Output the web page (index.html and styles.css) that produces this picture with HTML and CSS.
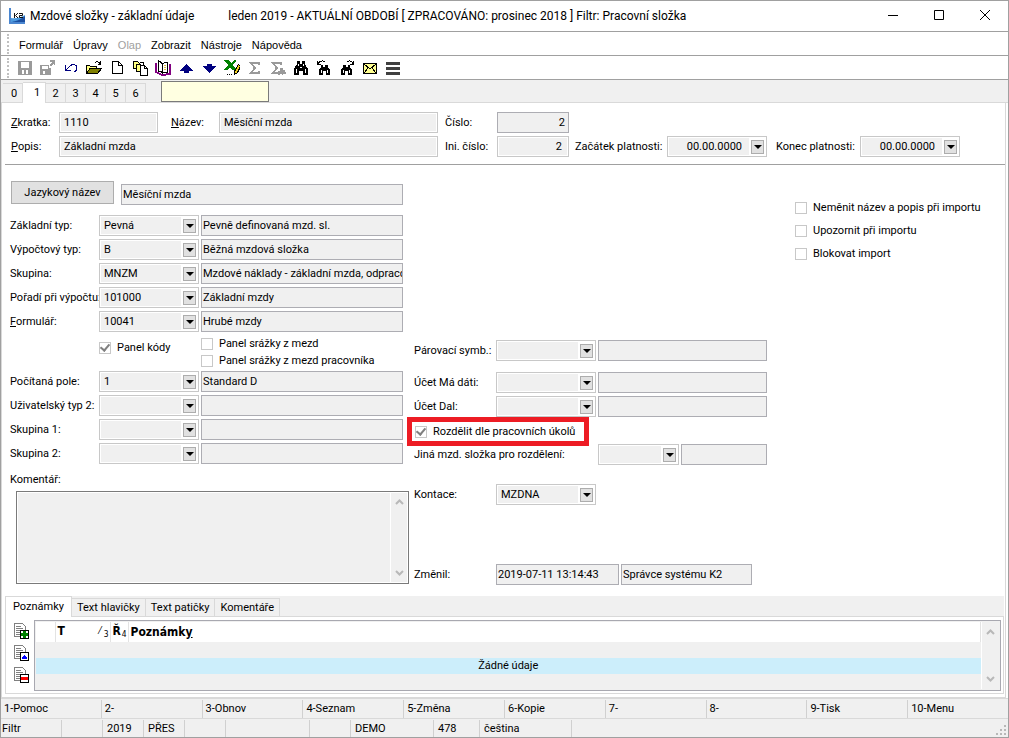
FILE: index.html
```html
<!DOCTYPE html>
<html lang="cs">
<head>
<meta charset="utf-8">
<title>Mzdové složky - základní údaje</title>
<link rel="stylesheet" href="styles.css">
</head>
<body>
<div class="window">
  <header class="titlebar">
    <svg class="logo" width="16" height="16" viewBox="0 0 16 16" aria-hidden="true"><path d="M2 10C8 11 12 9 16 7V15H2Z" fill="#4c9be0"/><path d="M3 14c4-1 8-2 13-6v7H3z" fill="#1b4fa0"/><path d="M1 0V15H16" fill="none" stroke="#4a86d0" stroke-width="2"/><path d="M5.500 5v5M9 5L6.500 7.500 9 10M10 5.500h3.500v2h-3v2H14" fill="none" stroke="#111"/></svg>
    <h1 class="title"><span>Mzdové složky - základní údaje</span><span>leden 2019 - AKTUÁLNÍ OBDOBÍ [ ZPRACOVÁNO: prosinec 2018 ] Filtr: Pracovní složka</span></h1>
    <div class="window-buttons">
      <button type="button" aria-label="Minimalizovat"><svg width="12" height="12"><path d="M1 5.500H11" stroke="#000"/></svg></button>
      <button type="button" aria-label="Maximalizovat"><svg width="12" height="12"><path d="M1.500 0.500h9v9h-9z" fill="none" stroke="#000"/></svg></button>
      <button type="button" aria-label="Zavřít"><svg width="12" height="12"><path d="M1 0L11 10M11 0L1 10" stroke="#000"/></svg></button>
    </div>
  </header>

  <nav class="menu">
    <button type="button">Formulář</button><button type="button">Úpravy</button><button type="button" disabled>Olap</button><button type="button">Zobrazit</button><button type="button">Nástroje</button><button type="button">Nápověda</button>
  </nav>

  <div class="toolbar">
    <button type="button" aria-label="Uložit"><svg viewBox="0 0 16 16"><path fill="#9a9a9a" fill-rule="evenodd" d="M1 1h14v14H1zM4 2v6h8V2zM5 10v4h2v-4zM9 10v4h2v-4z"/></svg></button>
    <button type="button" aria-label="Uložit a zavřít"><svg viewBox="0 0 16 16"><path fill="#9a9a9a" fill-rule="evenodd" d="M0 5h9v3h2v7H0zM2 6v3h6V6zM3 11v3h2v-3z"/><path fill="#9a9a9a" d="M10 0h5v5h-1V3l-3 4-2-2 4-3h-3z"/></svg></button>
    <button type="button" aria-label="Zpět"><svg viewBox="0 0 16 16"><path d="M2.500 5v5.500H8M3 10l4-4c2-2 7-2 7 2 0 2-1 3-3 4" fill="none" stroke="#000080"/></svg></button>
    <button type="button" aria-label="Otevřít"><svg viewBox="0 0 16 16"><path d="M.5 13.500V5.500h3l1 1h6v2" fill="#ffff80" stroke="#000"/><path d="M.5 13.500L4 8.500h11.500l-4 5z" fill="#808000" stroke="#000"/><path d="M9 3c1-2 4-2 5 1M14.500 1v3.500h-3" fill="none" stroke="#000"/></svg></button>
    <button type="button" aria-label="Nový"><svg viewBox="0 0 16 16"><path d="M3.500 1.500h6l4 4v8h-10z" fill="#fff" stroke="#000"/><path d="M9.500 1.500v4h4" fill="none" stroke="#000"/></svg></button>
    <button type="button" aria-label="Kopírovat"><svg viewBox="0 0 16 16"><path d="M1.500 1.500h4l2 2v5h-6z" fill="#ffff80" stroke="#000"/><path d="M4.500 4.500h4l2 2v5h-6z" fill="#ffff80" stroke="#000"/><path d="M8.500 5.500h4l3 3v7h-7z" fill="#fff" stroke="#000"/><path d="M12.500 5.500v3h3M8 2.500h3.500v3" fill="none" stroke="#000"/></svg></button>
    <button type="button" aria-label="Kniha"><svg viewBox="0 0 16 16"><path d="M1 3v9l6 3 8-1V4" fill="#fff" stroke="#800080" stroke-width="2"/><path d="M3.500 1c3 1 4 2 4 4v8c-1-2-3-2-4-2zM7.500 5c0-2 3-3 5-3v10c-3 0-4 0-5 1z" fill="#fff" stroke="#000"/><path d="M9 5h2M9 7h2M9 9h2" stroke="#e0c040"/></svg></button>
    <button type="button" aria-label="Předchozí"><svg viewBox="0 0 16 16"><path d="M8 4L15 10v1h-4v2H6v-2H2v-1z" fill="#000080"/></svg></button>
    <button type="button" aria-label="Další"><svg viewBox="0 0 16 16"><path d="M8 13L15 7V6h-4V4H6v2H2v1z" fill="#000080"/></svg></button>
    <button type="button" aria-label="Export do Excelu"><svg viewBox="0 0 16 16"><path d="M0 0h4l3 3 3-3h2v2L8 5l4 4v1H8L6 7l-3 3H0l4-5z" fill="#008000"/><path d="M14.500 4.500l-4 7v3l3-2 3-6z" fill="#f0d020" stroke="#000"/><path d="M3 14.500h1M5 14.500h1M7 14.500h1" stroke="#000"/></svg></button>
    <button type="button" aria-label="Součet"><svg viewBox="0 0 16 16"><path d="M12 5V3H4l4 5-4 5h8v-2" fill="none" stroke="#9a9a9a" stroke-width="2"/></svg></button>
    <button type="button" aria-label="Mezisoučet"><svg viewBox="0 0 16 16"><path d="M11 5V3H3l4 5-4 5h5" fill="none" stroke="#9a9a9a" stroke-width="2"/><path d="M10 8h3v2h2v2h1v2h-3v1h-1v-1h-2v1H8v-4h2z" fill="#9a9a9a"/></svg></button>
    <button type="button" aria-label="Hledat"><svg viewBox="0 0 16 16"><path d="M4 1h3v3h2V1h3v3l3 5v6h-5v-4H6v4H1V9l3-5z" fill="#000"/><path d="M5.500 4v2M3.500 9v4M10.500 4v2M12.500 9v4M7 7.500h2" stroke="#fff"/></svg></button>
    <button type="button" aria-label="Hledat předchozí"><svg viewBox="0 0 16 16"><path d="M5 5h2v2h2V5h3v2l2 3v5h-4v-4H7v4H3v-5l2-3z" fill="#000"/><path d="M5.500 10v3M11.500 10v3" stroke="#fff"/><path d="M1.500 1v3.500H5M2 4c1-3 5-4 7-2" fill="none" stroke="#000"/></svg></button>
    <button type="button" aria-label="Hledat další"><svg viewBox="0 0 16 16"><path d="M4 5h3v2h2V5h2v2l2 3v5H9v-4H6v4H2v-5l2-3z" fill="#000"/><path d="M4.500 10v3M10.500 10v3" stroke="#fff"/><path d="M14.500 1v3.500H11M14 4c-1-3-4-4-6-2" fill="none" stroke="#000"/></svg></button>
    <button type="button" aria-label="E-mail"><svg viewBox="0 0 16 16"><path d="M1.500 3.500h13v10h-13z" fill="#ffff90" stroke="#000"/><path d="M2 4l6 5 6-5M2 13l4-5M14 13l-4-5" fill="none" stroke="#000"/></svg></button>
    <button type="button" aria-label="Nabídka"><svg viewBox="0 0 16 16"><path d="M1 3.500h14M1 8.500h14M1 13.500h14" stroke="#404040" stroke-width="3"/></svg></button>
  </div>

  <div class="pagetabs">
    <button type="button">0</button><button type="button" class="active">1</button><button type="button">2</button><button type="button">3</button><button type="button">4</button><button type="button">5</button><button type="button">6</button>
    <input class="quick" type="text" aria-label="Rychlé hledání">
  </div>

  <main class="page">
    <section class="head">
      <label for="zkratka"><u>Z</u>kratka:</label><input id="zkratka" class="edit" value="1110">
      <label for="nazev" class="c-name"><u>N</u>ázev:</label><input id="nazev" class="edit" value="Měsíční mzda">
      <label for="cislo" class="c-num">Číslo:</label><input id="cislo" class="info num" value="2" readonly>
      <label for="popis" class="c-first"><u>P</u>opis:</label><input id="popis" class="edit c-wide" value="Základní mzda">
      <label for="ini" class="c-num">Ini. číslo:</label><input id="ini" class="edit num" value="2">
      <label for="od" class="c-from">Začátek platnosti:</label><div class="combo"><input id="od" value="00.00.0000"><button type="button" class="drop" aria-label="Vybrat začátek"></button></div>
      <label for="do" class="c-to">Konec platnosti:</label><div class="combo"><input id="do" value="00.00.0000"><button type="button" class="drop" aria-label="Vybrat konec"></button></div>
    </section>

    <section class="body">
      <div class="left">
        <div class="lang"><button type="button" class="push">Jazykový název</button><input class="info" aria-label="Jazykový název" value="Měsíční mzda" readonly></div>
        <div class="row"><label for="l1">Základní typ:</label><div class="combo"><select id="l1"><option>Pevná</option></select><i class="drop"></i></div><input class="info" aria-label="Základní typ, název" value="Pevně definovaná mzd. sl." readonly></div>
        <div class="row"><label for="l2">Výpočtový typ:</label><div class="combo"><select id="l2"><option>B</option></select><i class="drop"></i></div><input class="info" aria-label="Výpočtový typ, název" value="Běžná mzdová složka" readonly></div>
        <div class="row"><label for="l3">Skupina:</label><div class="combo"><select id="l3"><option>MNZM</option></select><i class="drop"></i></div><input class="info" aria-label="Skupina, název" value="Mzdové náklady - základní mzda, odpraco" readonly></div>
        <div class="row"><label for="l4">Pořadí při výpočtu:</label><div class="combo"><select id="l4"><option>101000</option></select><i class="drop"></i></div><input class="info" aria-label="Pořadí, název" value="Základní mzdy" readonly></div>
        <div class="row"><label for="l5"><span><u>F</u>ormulář:</span></label><div class="combo"><select id="l5"><option>10041</option></select><i class="drop"></i></div><input class="info" aria-label="Formulář, název" value="Hrubé mzdy" readonly></div>
        <div class="row panels">
          <label class="check p-codes"><input type="checkbox" checked>Panel kódy</label>
          <div class="pair"><label class="check"><input type="checkbox">Panel srážky z mezd</label><label class="check"><input type="checkbox">Panel srážky z mezd pracovníka</label></div>
        </div>
        <div class="row"><label for="l6">Počítaná pole:</label><div class="combo"><select id="l6"><option>1</option></select><i class="drop"></i></div><input class="info" aria-label="Počítaná pole, název" value="Standard D" readonly></div>
        <div class="row"><label for="l7">Uživatelský typ 2:</label><div class="combo"><select id="l7"><option></option></select><i class="drop"></i></div><input class="info" aria-label="Uživatelský typ 2, název" readonly></div>
        <div class="row"><label for="l8">Skupina 1:</label><div class="combo"><select id="l8"><option></option></select><i class="drop"></i></div><input class="info" aria-label="Skupina 1, název" readonly></div>
        <div class="row"><label for="l9">Skupina 2:</label><div class="combo"><select id="l9"><option></option></select><i class="drop"></i></div><input class="info" aria-label="Skupina 2, název" readonly></div>
        <label for="komentar" class="memo-label">Komentář:</label>
        <div class="memo"><textarea id="komentar"></textarea><div class="scroll"><svg width="9" height="6"><path d="M1 5L4.500 1.500 8 5" fill="none" stroke="#b8b8b8" stroke-width="2"/></svg><svg width="9" height="6"><path d="M1 1L4.500 4.500 8 1" fill="none" stroke="#b8b8b8" stroke-width="2"/></svg></div></div>
      </div>

      <div class="middle">
        <div class="row pairing"><label for="m1">Párovací symb.:</label><div class="combo"><select id="m1"><option></option></select><i class="drop"></i></div><input class="info" aria-label="Párovací symbol, název" readonly></div>
        <div class="row"><label for="m2">Účet Má dáti:</label><div class="combo"><select id="m2"><option></option></select><i class="drop"></i></div><input class="info" aria-label="Účet Má dáti, název" readonly></div>
        <div class="row"><label for="m3">Účet Dal:</label><div class="combo"><select id="m3"><option></option></select><i class="drop"></i></div><input class="info" aria-label="Účet Dal, název" readonly></div>
        <label class="check split"><input type="checkbox" checked>Rozdělit dle pracovních úkolů</label>
        <div class="row other"><label for="m4">Jiná mzd. složka pro rozdělení:</label><div class="combo"><select id="m4"><option></option></select><i class="drop"></i></div><input class="info" aria-label="Jiná mzdová složka, název" readonly></div>
        <div class="row kont"><label for="m5">Kontace:</label><div class="combo"><select id="m5"><option>MZDNA</option></select><i class="drop"></i></div></div>
        <div class="row changed"><label for="m6">Změnil:</label><input id="m6" class="info" value="2019-07-11 13:14:43" readonly><input class="info" aria-label="Uživatel" value="Správce systému K2" readonly></div>
      </div>

      <div class="right">
        <label class="check"><input type="checkbox">Neměnit název a popis při importu</label>
        <label class="check"><input type="checkbox">Upozornit při importu</label>
        <label class="check"><input type="checkbox">Blokovat import</label>
      </div>
    </section>

    <section class="notes">
      <div class="notetabs"><button type="button" class="active">Poznámky</button><button type="button">Text hlavičky</button><button type="button">Text patičky</button><button type="button">Komentáře</button></div>
      <div class="notepage">
        <div class="noteicons">
          <button type="button" aria-label="Přidat"><svg viewBox="0 0 15 16"><path d="M.5 .5h8l3 3v10H.5z" fill="#fff" stroke="#808080"/><path d="M2 3.500h5M2 5.500h7M2 7.500h4M2 9.500h4M2 11.500h4" stroke="#808080"/><path d="M6.500 7.500h8v8h-8z" fill="#fff" stroke="#000"/><path d="M9 8h3v2h2v3h-2v2H9v-2H7v-3h2z" fill="#008000"/></svg></button>
          <button type="button" aria-label="Změnit"><svg viewBox="0 0 15 16"><path d="M.5 .5h8l3 3v10H.5z" fill="#fff" stroke="#808080"/><path d="M2 3.500h5M2 5.500h7M2 7.500h4M2 9.500h4M2 11.500h4" stroke="#808080"/><path d="M6.500 7.500h8v8h-8z" fill="#fff" stroke="#000"/><path d="M10 10h1v1h1v1h1v2H8v-2h1v-1h1z" fill="#0000ff"/></svg></button>
          <button type="button" aria-label="Odebrat"><svg viewBox="0 0 15 16"><path d="M.5 .5h8l3 3v10H.5z" fill="#fff" stroke="#808080"/><path d="M2 3.500h5M2 5.500h7M2 7.500h4M2 9.500h4M2 11.500h4" stroke="#808080"/><path d="M6.500 7.500h8v8h-8z" fill="#fff" stroke="#000"/><path d="M7 10h7v3H7z" fill="#ff0000"/></svg></button>
        </div>
        <div class="gridbox">
          <table class="grid">
            <colgroup><col class="w-mark"><col class="w-t"><col class="w-r"><col></colgroup>
            <thead><tr><th></th><th><div class="sorted">T<small>⁄ <sub>3</sub></small></div></th><th><div class="sorted">Ř<small><sub>4</sub></small></div></th><th>Poznámk<u>y</u></th></tr></thead>
            <tbody><tr class="blank"><td colspan="4"></td></tr><tr class="none"><td colspan="4">Žádné údaje</td></tr><tr class="blank"><td colspan="4"></td></tr></tbody>
          </table>
          <div class="scroll"><svg width="9" height="6"><path d="M1 5L4.500 1.500 8 5" fill="none" stroke="#b8b8b8" stroke-width="2"/></svg><svg width="9" height="6"><path d="M1 1L4.500 4.500 8 1" fill="none" stroke="#b8b8b8" stroke-width="2"/></svg></div>
        </div>
      </div>
    </section>
  </main>

  <div class="keys"><button type="button">1-Pomoc</button><button type="button">2-</button><button type="button">3-Obnov</button><button type="button">4-Seznam</button><button type="button">5-Změna</button><button type="button">6-Kopie</button><button type="button">7-</button><button type="button">8-</button><button type="button">9-Tisk</button><button type="button">10-Menu</button></div>
  <footer class="status"><span>Filtr</span><span></span><span>2019</span><span>PŘES</span><span></span><span></span><span></span><span>DEMO</span><span>478</span><span>čeština</span><span></span><svg width="10" height="10"><path d="M8 0h2v2H8zM8 4h2v2H8zM4 4h2v2H4zM8 8h2v2H8zM4 8h2v2H4zM0 8h2v2H0z" fill="#b8b8b8"/></svg></footer>
</div>
</body>
</html>
```

FILE: styles.css
```css
* { box-sizing: border-box; }

body {
  margin: 0;
  color: #000;
  font: 11px/14px Roboto, "Noto Sans", sans-serif;
}

button, input, select, textarea {
  margin: 0;
  padding: 0;
  border: 0;
  border-radius: 0;
  background: none;
  color: inherit;
  font: inherit;
  min-width: 0;
}

svg { display: block; }

.window {
  display: flex;
  flex-direction: column;
  min-height: 100vh;
  border: 1px solid #a0a0a0;
  background: #fff;
}

/* Title bar */
.titlebar {
  display: flex;
  align-items: center;
  height: 30px;
  padding-left: 8px;
}
.title {
  flex: 1;
  display: flex;
  gap: 34px;
  margin: 0;
  padding-left: 5px;
  font-size: 12px;
  font-weight: normal;
  line-height: 16px;
  white-space: nowrap;
}
.window-buttons { display: flex; }
.window-buttons button {
  display: flex;
  align-items: center;
  justify-content: center;
  width: 46px;
  height: 30px;
}

/* Menu and toolbar */
.menu, .toolbar {
  display: flex;
  align-items: center;
  height: 24px;
  border-top: 1px solid #a0a0a0;
}
.menu::before, .toolbar::before {
  content: "";
  height: 20px;
  margin-left: 6px;
  border-left: 2px dotted #c0c0c0;
}
.menu {
  gap: 10px;
  font: 11px/14px "Liberation Sans", Arial, sans-serif;
}
.menu button { padding-top: 2px; }
.menu button:disabled { color: #a0a0a0; }
.toolbar {
  gap: 7px;
  height: 25px;
  border-bottom: 1px solid #a0a0a0;
}
.toolbar::before { margin-right: 1px; }
.toolbar svg {
  width: 16px;
  height: 16px;
  shape-rendering: crispEdges;
}

/* Page tabs */
.pagetabs {
  display: flex;
  align-items: flex-end;
  height: 23px;
  padding-left: 2px;
  border-bottom: 1px solid #d9d9d9;
  background: #f0f0f0;
}
.pagetabs button {
  width: 20px;
  height: 19px;
  padding-top: 2px;
  border: 1px solid #d9d9d9;
  border-width: 1px 1px 0 0;
  text-align: center;
}
.pagetabs button:first-child { padding-left: 3px; }
.pagetabs .active {
  width: 23px;
  height: 21px;
  margin-bottom: -1px;
  padding: 0 0 0 6px;
  background: #fff;
}
.quick {
  width: 108px;
  height: 21px;
  margin-left: 15px;
  border: 1px solid #7a7a7a;
  background: #ffffe1;
}

/* Fields */
.edit, .combo {
  height: 21px;
  border: 1px solid #c8c8c8;
  background: #f0f0f0;
  box-shadow: inset 0 0 0 1px #fff;
}
.edit { padding: 0 4px 1px 4px; }
.info {
  height: 21px;
  padding: 0 0 1px 1px;
  border: 1px solid #adadb3;
  background: #f0f0f0;
}
.num { text-align: right; }
.edit.num { padding-right: 6px; }
.info.num { padding-right: 3px; }
.combo {
  display: flex;
  align-items: center;
  padding-right: 2px;
}
.combo select, .combo input {
  flex: 1;
  width: 0;
  height: 17px;
  padding: 0 0 0 4px;
  appearance: none;
}
.combo input {
  padding-right: 9px;
  text-align: right;
}
.drop {
  display: flex;
  align-items: center;
  justify-content: center;
  width: 13px;
  height: 14px;
  border: 1px solid #adadad;
  background: #e1e1e1;
  box-shadow: 0 0 0 2px #fff;
  pointer-events: none;
}
.drop::before {
  content: "";
  border: 4px solid transparent;
  border-top-color: #000;
  border-bottom: 0;
}
.check {
  display: flex;
  align-items: center;
  gap: 6px;
  white-space: nowrap;
}
.check input {
  appearance: none;
  display: flex;
  align-items: center;
  justify-content: center;
  width: 12px;
  height: 12px;
  border: 1px solid #c8c8c8;
  background: #fff;
}
.check input:checked::before {
  content: "";
  width: 4px;
  height: 7px;
  margin-bottom: 2px;
  border: solid #808080;
  border-width: 0 2px 2px 0;
  transform: rotate(40deg);
}

/* Form head */
.page {
  flex: 1;
  display: flex;
  flex-direction: column;
  margin-right: 2px;
  border: 1px solid #d9d9d9;
  border-top: 0;
}
.head {
  display: grid;
  grid-template-columns: 48px 99px 13px 48px 219px 7px 52px 72px 6px 92px 100px 9px 84px 100px;
  row-gap: 3px;
  align-items: center;
  margin: 0 0 0 3px;
  padding: 9px 0 7px 6px;
  border-bottom: 1px solid #a0a0a0;
}
.head label { white-space: nowrap; }
.c-first { grid-column: 1; }
.c-name { grid-column: 4; }
.c-num { grid-column: 7; }
.c-wide { grid-column: 2 / 6; }
.c-from { grid-column: 10; }
.c-to { grid-column: 13; }

/* Form body */
.body {
  flex: 1;
  display: flex;
  padding: 16px 0 8px 8px;
}
.left { width: 399px; }
.row {
  display: grid;
  grid-template-columns: 89px 100px 202px;
  column-gap: 2px;
  align-items: center;
  margin-bottom: 3px;
}
.row label { white-space: nowrap; }
.left .row { grid-template-columns: 87px 100px 202px; }
.lang {
  display: flex;
  align-items: flex-end;
  gap: 7px;
  margin-bottom: 11px;
  padding-left: 1px;
}
.lang .info {
  width: 282px;
  margin-bottom: -1px;
}
.push {
  width: 103px;
  height: 23px;
  border: 1px solid #adadad;
  background: #e1e1e1;
}
.left .panels {
  height: 34px;
  align-items: start;
  margin-bottom: 2px;
}
.p-codes {
  grid-column: 2;
  padding-top: 4px;
}
.panels .check { height: 17px; }
.left .panels .p-codes { height: 21px; }
.memo-label {
  display: block;
  margin: 9px 0 4px;
}
.memo {
  display: flex;
  height: 93px;
  margin: 0 0 0 6px;
  border: 1px solid #7a7a7a;
  background: #f0f0f0;
  box-shadow: inset 0 0 0 1px #fff;
}
.memo textarea {
  flex: 1;
  padding: 3px;
  resize: none;
}
.scroll {
  display: flex;
  flex-direction: column;
  justify-content: space-between;
  align-items: center;
  width: 18px;
  padding: 7px 0;
  border-left: 1px solid #fff;
}

.middle {
  width: 353px;
  margin-left: 5px;
  padding-top: 159px;
}
.middle .row { grid-template-columns: 80px 100px 169px; }
.middle .pairing { margin-bottom: 11px; }
.split {
  width: 182px;
  height: 29px;
  margin: -3px 0 -2px -7px;
  padding-left: 3px;
  border: 5px solid #ed1c24;
  background: #fff;
}
.middle .other {
  grid-template-columns: 182px 81px 86px;
  margin-bottom: 19px;
}
.middle .kont { margin-bottom: 59px; }
.middle .changed { grid-template-columns: 80px 123px 131px; }

.right {
  display: flex;
  flex-direction: column;
  gap: 9px;
  margin-left: 28px;
  padding-top: 20px;
}

/* Notes */
.notes {
  margin: 0 1px 3px 3px;
  background: #f0f0f0;
}
.notetabs {
  display: flex;
  align-items: flex-end;
  height: 20px;
}
.notetabs button {
  height: 18px;
  padding: 0 5px;
  border: 1px solid #d9d9d9;
  border-width: 1px 1px 0 0;
}
.notetabs .active {
  height: 21px;
  margin-bottom: -1px;
  padding: 0 7px;
  border-left-width: 1px;
  background: #fff;
}
.notepage {
  display: flex;
  padding: 3px 2px 2px 8px;
  border: 1px solid #d9d9d9;
  background: #fff;
}
.noteicons {
  display: flex;
  flex-direction: column;
  gap: 6px;
  width: 20px;
  padding-top: 3px;
}
.noteicons button {
  width: 15px;
  height: 16px;
}
.noteicons svg {
  width: 15px;
  height: 16px;
  shape-rendering: crispEdges;
}
.gridbox {
  flex: 1;
  display: flex;
  height: 71px;
  padding: 1px;
  border: 1px solid #a8a8b0;
  background: #f0f0f0;
}
.grid {
  flex: 1;
  table-layout: fixed;
  border-collapse: collapse;
}
.w-mark { width: 19px; }
.w-t { width: 55px; }
.w-r { width: 18px; }
.grid th {
  height: 20px;
  padding: 0 1px 0 2px;
  border-right: 1px solid #e3e3e3;
  background: #fff;
  font: bold 12px/16px "DejaVu Sans Condensed", "DejaVu Sans", sans-serif;
  text-align: left;
}
.grid td {
  height: 16px;
  padding: 0;
  text-align: center;
}
.grid .none td { background: #cceefb; }
.sorted {
  display: flex;
  justify-content: space-between;
}
.sorted small {
  font-size: 10px;
  font-weight: normal;
}

/* Function keys and status bar */
.keys, .status {
  display: flex;
  height: 20px;
  padding-top: 1px;
  border-top: 1px solid #d9d9d9;
  background: #f0f0f0;
}
.keys button {
  flex: 1;
  padding: 0 3px;
  border-right: 1px solid #d0d0d0;
  text-align: left;
}
.keys button:last-child { border-right: 0; }
.status {
  height: 19px;
  align-items: stretch;
}
.status span {
  width: 41px;
  padding: 2px 4px 0;
  border-right: 1px solid #d0d0d0;
}
.status span:nth-child(1) { width: 61px; padding-left: 1px; }
.status span:nth-child(6) { width: 84px; }
.status span:nth-child(8) { width: 83px; }
.status span:nth-child(9) { width: 46px; }
.status span:nth-child(10) { width: 92px; }
.status span:nth-child(11) { flex: 1; border: 0; }
.status svg { align-self: flex-end; margin: 0 2px 2px 0; }
```
